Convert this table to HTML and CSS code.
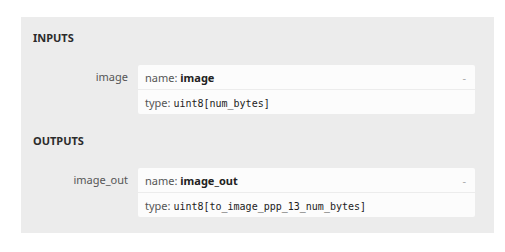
FILE: index.html
```html
<!DOCTYPE html>
<html>
<head>
<meta charset="utf-8">
<link rel="stylesheet" href="styles.css">
</head>
<body>
<div class="panel">
  <div class="section-title">INPUTS</div>
  <div class="row">
    <div class="label">image</div>
    <div class="card">
      <div class="line line-first"><span><span class="key">name:</span> <b class="val">image</b></span><span class="dash">-</span></div>
      <div class="line"><span><span class="key">type:</span> <code class="mono">uint8[num_bytes]</code></span></div>
    </div>
  </div>
  <div class="section-title">OUTPUTS</div>
  <div class="row">
    <div class="label">image_out</div>
    <div class="card">
      <div class="line line-first"><span><span class="key">name:</span> <b class="val">image_out</b></span><span class="dash">-</span></div>
      <div class="line"><span><span class="key">type:</span> <code class="mono">uint8[to_image_ppp_13_num_bytes]</code></span></div>
    </div>
  </div>
</div>
</body>
</html>
```
FILE: styles.css
```css
html, body {
  margin: 0;
  padding: 0;
  background: #ffffff;
}
body {
  font-family: "Noto Sans", "Open Sans", sans-serif;
  font-size: 11px;
  color: #333;
}
.panel {
  margin: 17px 0 0 21px;
  width: 473px;
  box-sizing: border-box;
  background: #ececec;
  padding: 13px 19px 16px 12px;
}
.section-title {
  font-weight: 700;
  line-height: 16px;
  height: 16px;
  color: #2b2b2b;
  margin-bottom: 19px;
}
.row {
  display: grid;
  grid-template-columns: 95px 1fr;
  column-gap: 10px;
  margin-bottom: 19px;
}
.row:last-child {
  margin-bottom: 0;
}
.label {
  text-align: right;
  line-height: 24px;
  color: #555;
}
.card {
  background: #fcfcfc;
  border-radius: 2px;
}
.line {
  display: flex;
  justify-content: space-between;
  align-items: center;
  height: 24px;
  padding: 0 9px 0 7px;
  color: #555;
}
.line-first {
  border-bottom: 1px solid #ececec;
}
.key {
  color: #555;
}
.val {
  font-weight: 700;
  color: #222;
}
.mono {
  font-family: "DejaVu Sans Mono", "Liberation Mono", monospace;
  font-size: 10px;
  color: #222;
}
.dash {
  color: #aaa;
}
```
